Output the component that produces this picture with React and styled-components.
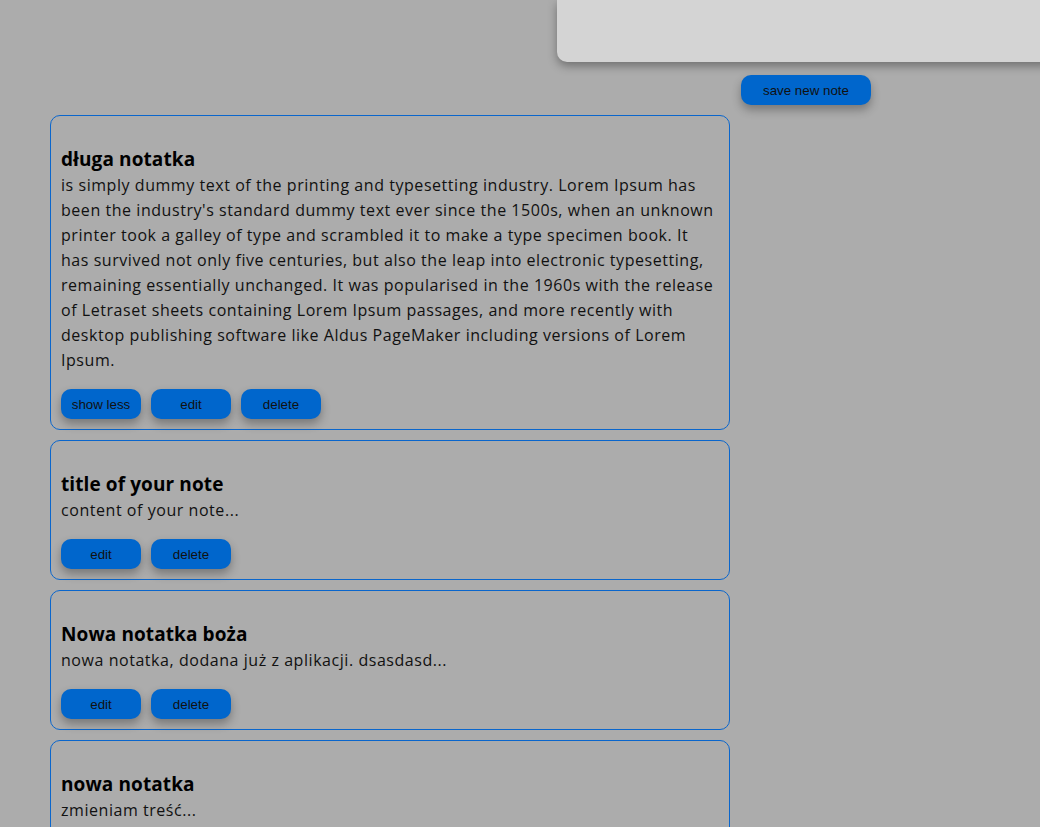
import React from "react";
import styled, { createGlobalStyle } from "styled-components";

const notes = [
  {
    id: 1,
    title: "długa notatka",
    content:
      "is simply dummy text of the printing and typesetting industry. Lorem Ipsum has been the industry's standard dummy text ever since the 1500s, when an unknown printer took a galley of type and scrambled it to make a type specimen book. It has survived not only five centuries, but also the leap into electronic typesetting, remaining essentially unchanged. It was popularised in the 1960s with the release of Letraset sheets containing Lorem Ipsum passages, and more recently with desktop publishing software like Aldus PageMaker including versions of Lorem Ipsum.",
    expanded: true,
  },
  { id: 2, title: "title of your note", content: "content of your note..." },
  {
    id: 3,
    title: "Nowa notatka boża",
    content: "nowa notatka, dodana już z aplikacji. dsasdasd...",
  },
  { id: 4, title: "nowa notatka", content: "zmieniam treść..." },
];

function App() {
  return (
    <>
      <GlobalStyle />
      <Page>
        <FormSection>
          <FormPanel />
          <Button wide>save new note</Button>
        </FormSection>
        <NotesList>
          {notes.map((note) => (
            <Card key={note.id}>
              <Title>{note.title}</Title>
              <Content>{note.content}</Content>
              <Actions>
                {note.expanded && <Button>show less</Button>}
                <Button>edit</Button>
                <Button>delete</Button>
              </Actions>
            </Card>
          ))}
        </NotesList>
      </Page>
    </>
  );
}

export default App;

const GlobalStyle = createGlobalStyle`
  html, body {
    margin: 0;
    background: #acacac;
    overflow: hidden;
  }
  body {
    font-family: "Open Sans", "Liberation Sans", sans-serif;
    color: #111;
  }
`;

const Page = styled.div`
  width: 1040px;
  height: 827px;
  overflow: hidden;
`;

const FormSection = styled.div`
  display: flex;
  flex-direction: column;
  align-items: center;
  gap: 13px;
  margin-left: 557px;
  width: 498px;
`;

const FormPanel = styled.div`
  width: 100%;
  height: 62px;
  background: #d4d4d4;
  border-radius: 0 0 10px 10px;
  box-shadow: 0 4px 10px rgba(0, 0, 0, 0.35);
`;

const NotesList = styled.div`
  display: flex;
  flex-direction: column;
  gap: 10px;
  margin: 10px 0 0 50px;
  width: 680px;
`;

const Card = styled.div`
  border: 1px solid #0a66cc;
  border-radius: 10px;
  padding: 31px 10px 10px;
`;

const Title = styled.h2`
  margin: 0 0 2px;
  font-size: 19px;
  line-height: 24px;
  font-weight: 700;
  letter-spacing: 0.1px;
  color: #000;
`;

const Content = styled.p`
  margin: 0 0 16px;
  font-size: 16px;
  line-height: 25px;
  letter-spacing: 0.55px;
`;

const Actions = styled.div`
  display: flex;
  gap: 10px;
`;

const Button = styled.button`
  width: ${(p) => (p.wide ? "130px" : "80px")};
  height: 30px;
  padding: 0;
  border: none;
  border-radius: 10px;
  background: #0066cc;
  color: #111;
  font-family: "Liberation Sans", Arial, sans-serif;
  font-size: 13.333px;
  box-shadow: 0 5px 10px rgba(0, 0, 0, 0.3);
  cursor: pointer;
`;
